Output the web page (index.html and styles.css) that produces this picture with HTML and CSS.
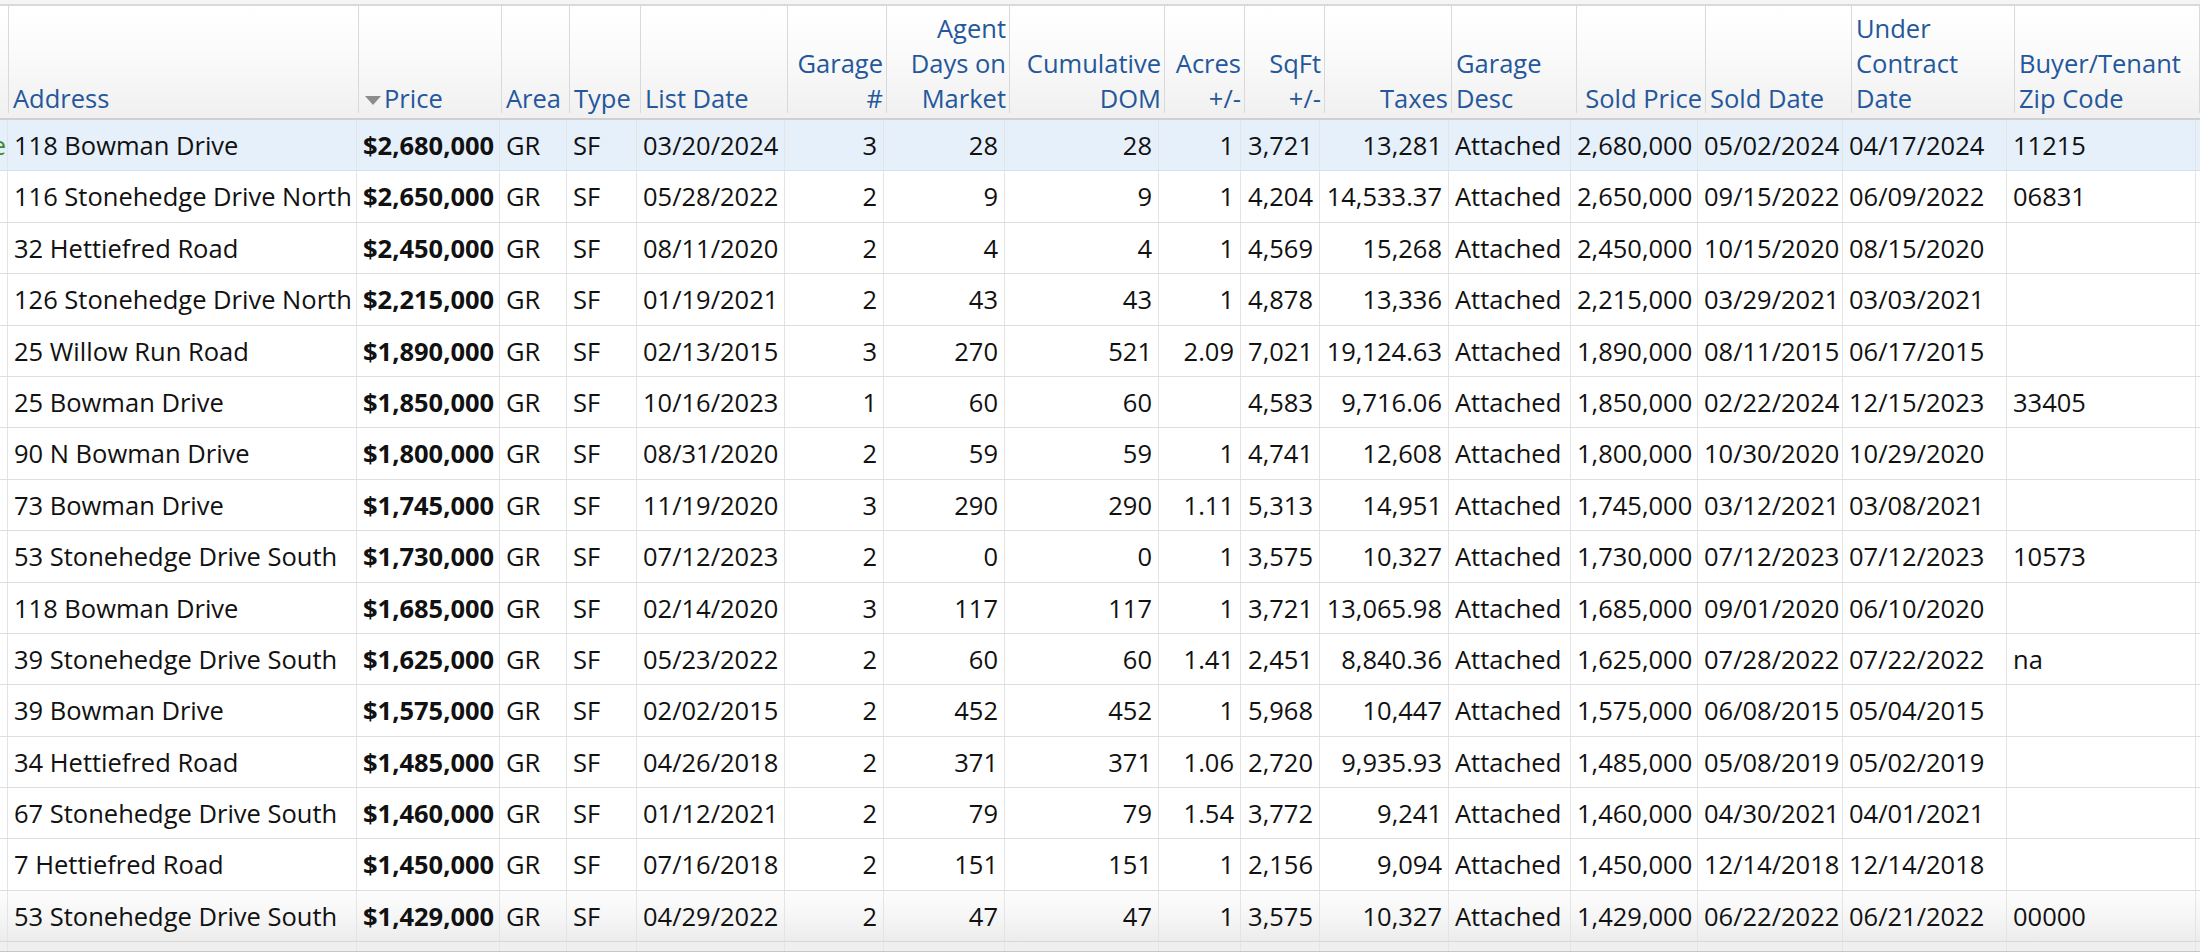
FILE: index.html
```html
<!DOCTYPE html>
<html>
<head>
<meta charset="utf-8">
<title>Listings</title>
<link rel="stylesheet" href="styles.css">
</head>
<body>
<div class="grid">
  <div class="topbar"></div>
  <div class="hdr">
    <div class="hc"><div class="ht"></div></div>
    <div class="hc"><div class="ht">Address</div></div>
    <div class="hc"><div class="ht"><span class="sort"></span>Price</div></div>
    <div class="hc"><div class="ht">Area</div></div>
    <div class="hc"><div class="ht">Type</div></div>
    <div class="hc"><div class="ht">List Date</div></div>
    <div class="hc r"><div class="ht">Garage<br>#</div></div>
    <div class="hc r"><div class="ht">Agent<br>Days on<br>Market</div></div>
    <div class="hc r"><div class="ht">Cumulative<br>DOM</div></div>
    <div class="hc r"><div class="ht">Acres<br>+/-</div></div>
    <div class="hc r"><div class="ht">SqFt<br>+/-</div></div>
    <div class="hc r"><div class="ht">Taxes</div></div>
    <div class="hc"><div class="ht">Garage<br>Desc</div></div>
    <div class="hc r"><div class="ht">Sold Price</div></div>
    <div class="hc"><div class="ht">Sold Date</div></div>
    <div class="hc"><div class="ht">Under<br>Contract<br>Date</div></div>
    <div class="hc"><div class="ht">Buyer/Tenant<br>Zip Code</div></div>
    <div class="hc last"><div class="ht"></div></div>
  </div>
  <div class="rows">
    <div class="row sel">
      <div class="c st">Active</div><div class="c">118 Bowman Drive</div><div class="c b">$2,680,000</div><div class="c">GR</div><div class="c">SF</div><div class="c">03/20/2024</div><div class="c r">3</div><div class="c r">28</div><div class="c r">28</div><div class="c r">1</div><div class="c r">3,721</div><div class="c r">13,281</div><div class="c">Attached</div><div class="c r">2,680,000</div><div class="c">05/02/2024</div><div class="c">04/17/2024</div><div class="c">11215</div><div class="c"></div>
    </div>
    <div class="row">
      <div class="c st"></div><div class="c">116 Stonehedge Drive North</div><div class="c b">$2,650,000</div><div class="c">GR</div><div class="c">SF</div><div class="c">05/28/2022</div><div class="c r">2</div><div class="c r">9</div><div class="c r">9</div><div class="c r">1</div><div class="c r">4,204</div><div class="c r">14,533.37</div><div class="c">Attached</div><div class="c r">2,650,000</div><div class="c">09/15/2022</div><div class="c">06/09/2022</div><div class="c">06831</div><div class="c"></div>
    </div>
    <div class="row">
      <div class="c st"></div><div class="c">32 Hettiefred Road</div><div class="c b">$2,450,000</div><div class="c">GR</div><div class="c">SF</div><div class="c">08/11/2020</div><div class="c r">2</div><div class="c r">4</div><div class="c r">4</div><div class="c r">1</div><div class="c r">4,569</div><div class="c r">15,268</div><div class="c">Attached</div><div class="c r">2,450,000</div><div class="c">10/15/2020</div><div class="c">08/15/2020</div><div class="c"></div><div class="c"></div>
    </div>
    <div class="row">
      <div class="c st"></div><div class="c">126 Stonehedge Drive North</div><div class="c b">$2,215,000</div><div class="c">GR</div><div class="c">SF</div><div class="c">01/19/2021</div><div class="c r">2</div><div class="c r">43</div><div class="c r">43</div><div class="c r">1</div><div class="c r">4,878</div><div class="c r">13,336</div><div class="c">Attached</div><div class="c r">2,215,000</div><div class="c">03/29/2021</div><div class="c">03/03/2021</div><div class="c"></div><div class="c"></div>
    </div>
    <div class="row">
      <div class="c st"></div><div class="c">25 Willow Run Road</div><div class="c b">$1,890,000</div><div class="c">GR</div><div class="c">SF</div><div class="c">02/13/2015</div><div class="c r">3</div><div class="c r">270</div><div class="c r">521</div><div class="c r">2.09</div><div class="c r">7,021</div><div class="c r">19,124.63</div><div class="c">Attached</div><div class="c r">1,890,000</div><div class="c">08/11/2015</div><div class="c">06/17/2015</div><div class="c"></div><div class="c"></div>
    </div>
    <div class="row">
      <div class="c st"></div><div class="c">25 Bowman Drive</div><div class="c b">$1,850,000</div><div class="c">GR</div><div class="c">SF</div><div class="c">10/16/2023</div><div class="c r">1</div><div class="c r">60</div><div class="c r">60</div><div class="c r"></div><div class="c r">4,583</div><div class="c r">9,716.06</div><div class="c">Attached</div><div class="c r">1,850,000</div><div class="c">02/22/2024</div><div class="c">12/15/2023</div><div class="c">33405</div><div class="c"></div>
    </div>
    <div class="row">
      <div class="c st"></div><div class="c">90 N Bowman Drive</div><div class="c b">$1,800,000</div><div class="c">GR</div><div class="c">SF</div><div class="c">08/31/2020</div><div class="c r">2</div><div class="c r">59</div><div class="c r">59</div><div class="c r">1</div><div class="c r">4,741</div><div class="c r">12,608</div><div class="c">Attached</div><div class="c r">1,800,000</div><div class="c">10/30/2020</div><div class="c">10/29/2020</div><div class="c"></div><div class="c"></div>
    </div>
    <div class="row">
      <div class="c st"></div><div class="c">73 Bowman Drive</div><div class="c b">$1,745,000</div><div class="c">GR</div><div class="c">SF</div><div class="c">11/19/2020</div><div class="c r">3</div><div class="c r">290</div><div class="c r">290</div><div class="c r">1.11</div><div class="c r">5,313</div><div class="c r">14,951</div><div class="c">Attached</div><div class="c r">1,745,000</div><div class="c">03/12/2021</div><div class="c">03/08/2021</div><div class="c"></div><div class="c"></div>
    </div>
    <div class="row">
      <div class="c st"></div><div class="c">53 Stonehedge Drive South</div><div class="c b">$1,730,000</div><div class="c">GR</div><div class="c">SF</div><div class="c">07/12/2023</div><div class="c r">2</div><div class="c r">0</div><div class="c r">0</div><div class="c r">1</div><div class="c r">3,575</div><div class="c r">10,327</div><div class="c">Attached</div><div class="c r">1,730,000</div><div class="c">07/12/2023</div><div class="c">07/12/2023</div><div class="c">10573</div><div class="c"></div>
    </div>
    <div class="row">
      <div class="c st"></div><div class="c">118 Bowman Drive</div><div class="c b">$1,685,000</div><div class="c">GR</div><div class="c">SF</div><div class="c">02/14/2020</div><div class="c r">3</div><div class="c r">117</div><div class="c r">117</div><div class="c r">1</div><div class="c r">3,721</div><div class="c r">13,065.98</div><div class="c">Attached</div><div class="c r">1,685,000</div><div class="c">09/01/2020</div><div class="c">06/10/2020</div><div class="c"></div><div class="c"></div>
    </div>
    <div class="row">
      <div class="c st"></div><div class="c">39 Stonehedge Drive South</div><div class="c b">$1,625,000</div><div class="c">GR</div><div class="c">SF</div><div class="c">05/23/2022</div><div class="c r">2</div><div class="c r">60</div><div class="c r">60</div><div class="c r">1.41</div><div class="c r">2,451</div><div class="c r">8,840.36</div><div class="c">Attached</div><div class="c r">1,625,000</div><div class="c">07/28/2022</div><div class="c">07/22/2022</div><div class="c">na</div><div class="c"></div>
    </div>
    <div class="row">
      <div class="c st"></div><div class="c">39 Bowman Drive</div><div class="c b">$1,575,000</div><div class="c">GR</div><div class="c">SF</div><div class="c">02/02/2015</div><div class="c r">2</div><div class="c r">452</div><div class="c r">452</div><div class="c r">1</div><div class="c r">5,968</div><div class="c r">10,447</div><div class="c">Attached</div><div class="c r">1,575,000</div><div class="c">06/08/2015</div><div class="c">05/04/2015</div><div class="c"></div><div class="c"></div>
    </div>
    <div class="row">
      <div class="c st"></div><div class="c">34 Hettiefred Road</div><div class="c b">$1,485,000</div><div class="c">GR</div><div class="c">SF</div><div class="c">04/26/2018</div><div class="c r">2</div><div class="c r">371</div><div class="c r">371</div><div class="c r">1.06</div><div class="c r">2,720</div><div class="c r">9,935.93</div><div class="c">Attached</div><div class="c r">1,485,000</div><div class="c">05/08/2019</div><div class="c">05/02/2019</div><div class="c"></div><div class="c"></div>
    </div>
    <div class="row">
      <div class="c st"></div><div class="c">67 Stonehedge Drive South</div><div class="c b">$1,460,000</div><div class="c">GR</div><div class="c">SF</div><div class="c">01/12/2021</div><div class="c r">2</div><div class="c r">79</div><div class="c r">79</div><div class="c r">1.54</div><div class="c r">3,772</div><div class="c r">9,241</div><div class="c">Attached</div><div class="c r">1,460,000</div><div class="c">04/30/2021</div><div class="c">04/01/2021</div><div class="c"></div><div class="c"></div>
    </div>
    <div class="row">
      <div class="c st"></div><div class="c">7 Hettiefred Road</div><div class="c b">$1,450,000</div><div class="c">GR</div><div class="c">SF</div><div class="c">07/16/2018</div><div class="c r">2</div><div class="c r">151</div><div class="c r">151</div><div class="c r">1</div><div class="c r">2,156</div><div class="c r">9,094</div><div class="c">Attached</div><div class="c r">1,450,000</div><div class="c">12/14/2018</div><div class="c">12/14/2018</div><div class="c"></div><div class="c"></div>
    </div>
    <div class="row fade">
      <div class="c st"></div><div class="c">53 Stonehedge Drive South</div><div class="c b">$1,429,000</div><div class="c">GR</div><div class="c">SF</div><div class="c">04/29/2022</div><div class="c r">2</div><div class="c r">47</div><div class="c r">47</div><div class="c r">1</div><div class="c r">3,575</div><div class="c r">10,327</div><div class="c">Attached</div><div class="c r">1,429,000</div><div class="c">06/22/2022</div><div class="c">06/21/2022</div><div class="c">00000</div><div class="c"></div>
    </div>
    <div class="row ghost">
      <div class="c st"></div><div class="c"></div><div class="c"></div><div class="c"></div><div class="c"></div><div class="c"></div><div class="c"></div><div class="c"></div><div class="c"></div><div class="c"></div><div class="c"></div><div class="c"></div><div class="c"></div><div class="c"></div><div class="c"></div><div class="c"></div><div class="c"></div><div class="c"></div>
    </div>
  </div>
</div>
</body>
</html>
```

FILE: styles.css
```css
html, body {
  margin: 0;
  padding: 0;
  background: #ffffff;
}

body {
  font-family: "Open Sans", "DejaVu Sans", sans-serif;
  font-size: 25.5px;
  color: #111111;
}

.grid {
  height: 952px;
  box-sizing: border-box;
  overflow: hidden;
  border-bottom: 1px solid #c6c6c6;
}

.topbar {
  height: 4px;
  background: #f5f5f5;
  border-bottom: 2px solid #dadada;
}

.hdr {
  display: grid;
  grid-template-columns: 9px 350px 143px 68px 71px 147px 99px 123px 155px 80px 80px 127px 125px 129px 146px 163px 1fr;
  height: 114px;
  box-sizing: border-box;
  border-bottom: 2px solid #d0d0d0;
  background: linear-gradient(to bottom, #ffffff 0%, #fbfbfb 40%, #f0f0f0 100%);
}

.hc {
  display: flex;
  flex-direction: column;
  justify-content: flex-end;
  box-sizing: border-box;
  padding: 0 4px 0 4px;
  border-right: 1px solid #d9d9d9;
  color: #24579b;
  line-height: 35px;
  white-space: nowrap;
}

.ht {
  margin-bottom: -3px;
}

.hc.r {
  text-align: right;
  padding-right: 3px;
}

.hc.last {
  border-right: none;
}

.sort {
  display: inline-block;
  width: 0;
  height: 0;
  border-left: 8px solid transparent;
  border-right: 8px solid transparent;
  border-top: 9px solid #8c8c8c;
  margin: 0 3px 0 2px;
  vertical-align: 3px;
}

.row {
  display: grid;
  grid-template-columns: 8px 349px 143px 67px 70px 148px 99px 121px 154px 82px 79px 129px 122px 127px 145px 164px 189px 1fr;
  height: 51.4px;
  box-sizing: border-box;
  border-bottom: 1px solid #dedede;
}

.row.sel {
  background: #e6f0fb;
  border-bottom-color: #d4e0ee;
}

.row.fade {
  background: linear-gradient(to bottom, #fdfdfd 0%, #f6f6f6 50%, #ececec 100%);
  border-bottom-color: #d8d8d8;
}

.row.ghost {
  background: #efefef;
}

.c {
  box-sizing: border-box;
  padding: 0 6px;
  border-right: 1px solid #e4e4e4;
  line-height: 50.4px;
  white-space: nowrap;
  overflow: hidden;
}

.c.r {
  text-align: right;
}

.c.b {
  font-weight: 700;
}

.c.st {
  display: flex;
  justify-content: flex-end;
  padding: 0 1px 0 0;
  color: #3d8c2c;
}
```
